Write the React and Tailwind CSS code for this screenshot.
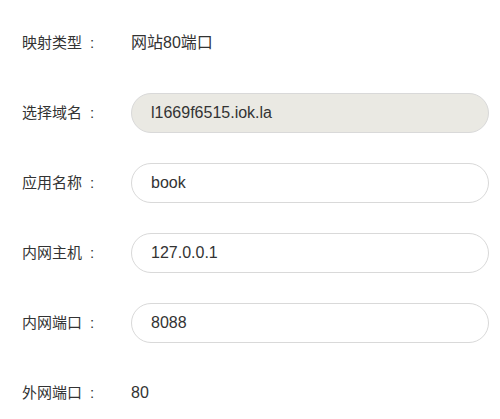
import { useState } from "react";

const FONT = { fontFamily: '"Liberation Sans", Arial, "Noto Sans CJK SC", sans-serif' };

function Row({ label, children }) {
  return (
    <div className="flex h-[70px] items-center">
      <label className="w-[131px] shrink-0 pl-[22px] text-[15px] text-[#333]">
        {label}
        <span className="ml-[8px]">:</span>
      </label>
      {children}
    </div>
  );
}

function Field({ value, disabled, onChange }) {
  return (
    <input
      value={value}
      disabled={disabled}
      onChange={onChange}
      style={FONT}
      className={
        "h-[40px] w-[358px] rounded-full border border-[#d9d9d9] px-[19px] text-[16px] text-[#333] outline-none " +
        (disabled ? "bg-[#eae9e3]" : "bg-white")
      }
    />
  );
}

export default function App() {
  const [name, setName] = useState("book");
  const [host, setHost] = useState("127.0.0.1");
  const [port, setPort] = useState("8088");

  return (
    <div className="min-h-[419px] bg-white pt-[8px]" style={FONT}>
      <Row label="映射类型">
        <span className="text-[16px] text-[#333]">网站80端口</span>
      </Row>
      <Row label="选择域名">
        <Field value="l1669f6515.iok.la" disabled />
      </Row>
      <Row label="应用名称">
        <Field value={name} onChange={(e) => setName(e.target.value)} />
      </Row>
      <Row label="内网主机">
        <Field value={host} onChange={(e) => setHost(e.target.value)} />
      </Row>
      <Row label="内网端口">
        <Field value={port} onChange={(e) => setPort(e.target.value)} />
      </Row>
      <Row label="外网端口">
        <span className="text-[16px] text-[#333]">80</span>
      </Row>
    </div>
  );
}
